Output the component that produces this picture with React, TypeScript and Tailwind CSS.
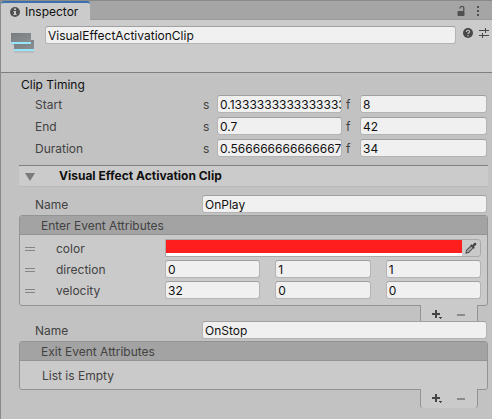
import { useId, type ReactNode } from "react";

const field =
  "h-[18px] w-full min-w-0 rounded-[3px] border border-[#b4b4b4] border-t-[#a0a0a0] bg-[#f0f0f0] pl-0.5 text-xs leading-4 text-[#101010] outline-none focus:border-[#3a72b0]";

function TextField({ label, value, id }: { label?: string; value: string; id?: string }) {
  return <input id={id} aria-label={label} type="text" defaultValue={value} className={field} />;
}

function TimingRow({ label, seconds, frames }: { label: string; seconds: string; frames: string }) {
  const id = useId();
  return (
    <div className="flex h-[18px] items-center">
      <span className="w-[168px] shrink-0 pt-0.5">{label}</span>
      <label htmlFor={id + "s"} className="w-3.5 shrink-0 pt-0.5">s</label>
      <div className="flex min-w-0 flex-[125]">
        <TextField id={id + "s"} value={seconds} />
      </div>
      <label htmlFor={id + "f"} className="w-[18px] shrink-0 pt-0.5 pl-1">f</label>
      <div className="flex min-w-0 flex-[127]">
        <TextField id={id + "f"} value={frames} />
      </div>
    </div>
  );
}

function NameRow({ value }: { value: string }) {
  const id = useId();
  return (
    <div className="flex h-[18px] items-center pr-[5px] pl-[35px]">
      <label htmlFor={id} className="w-[167px] shrink-0 pt-0.5">Name</label>
      <TextField id={id} value={value} />
    </div>
  );
}

function Handle() {
  return <span className="mt-0.5 mr-[21px] h-1 w-2.5 shrink-0 border-y border-[#858585]" />;
}

function AttributeRow({ label, children }: { label: string; children: ReactNode }) {
  return (
    <div className="flex h-[18px] items-center">
      <Handle />
      <span className="w-[109px] shrink-0 pt-0.5">{label}</span>
      {children}
    </div>
  );
}

function VectorFields({ label, values }: { label: string; values: string[] }) {
  return (
    <div className="grid min-w-0 flex-1 grid-cols-3 gap-x-[15px]">
      {values.map((v, i) => (
        <TextField key={i} label={`${label} ${"xyz"[i]}`} value={v} />
      ))}
    </div>
  );
}

function ListBox({ title, children }: { title: string; children: ReactNode }) {
  return (
    <section className="mr-1 ml-[19px]">
      <div className="rounded-[3px] border border-[#939393] bg-[#cacaca]">
        <h3 className="h-[19px] rounded-t-[2px] border-b border-[#939393] bg-[#a3a3a3] pt-0.5 pl-[21px]">{title}</h3>
        {children}
      </div>
      <div className="relative -mt-px mr-[10px] ml-auto flex h-[19px] w-[58px] rounded-b-[3px] border-x border-[#939393] bg-[#cacaca]">
        <button type="button" aria-label="Add" className="flex flex-1 items-center justify-center">
          <svg width="12" height="12" viewBox="0 0 12 12" fill="#454545" className="ml-1">
            <path d="M4 1h2v3h3v2H6v3H4V6H1V4h3zM8 8h3v1h-1v1H9V9H8z" />
          </svg>
        </button>
        <button type="button" aria-label="Remove" className="flex flex-1 items-center justify-center">
          <svg width="8" height="2" viewBox="0 0 8 2" className="mr-1">
            <path d="M0 0h8v2H0z" fill="#8b8b8b" />
          </svg>
        </button>
      </div>
    </section>
  );
}

function ClipIcon() {
  return (
    <svg width="24" height="24" viewBox="0 0 24 24" className="shrink-0">
      <defs>
        <linearGradient id="clip" x1="0" y1="0" x2="1" y2="1">
          <stop offset="0" stopColor="#797c7e" />
          <stop offset="1" stopColor="#8c8f91" />
        </linearGradient>
      </defs>
      <path d="M0 13h3v1H0zM3 20h20v2H3z" fill="#b9bbbc" />
      <path d="M3 9h20v9H3z" fill="url(#clip)" />
      <path d="M3 18h20v2H3z" fill="#94e6fc" />
      <path d="M0 2h20v9H0z" fill="url(#clip)" />
      <path d="M0 11h20v2H0z" fill="#94e6fc" />
    </svg>
  );
}

export default function App() {
  return (
    <main className="min-h-screen border-l border-[#8a8a8a] bg-[#c2c2c2] font-['Inter','Liberation_Sans',sans-serif] text-xs leading-4 text-[#424242]">
      <div className="flex h-5 justify-between border-t border-[#8a8a8a] bg-[#a5a5a5]">
        <div role="tablist" className="flex">
          <button
            type="button"
            role="tab"
            aria-selected="true"
            className="flex w-[89px] items-center rounded-t-[3px] border-t-2 border-[#3a72b0] bg-[#cbcbcb] pl-[9px] text-[#101010]"
          >
            <svg width="10" height="10" viewBox="0 0 10 10" className="mr-[5px]">
              <circle cx="5" cy="5" r="5" fill="#505050" />
              <path d="M4 1.5h2v1.5H4zM3.5 4H6v3h.7v1H3.3V7H4V5h-.5z" fill="#cbcbcb" />
            </svg>
            Inspector
          </button>
        </div>
        <div className="flex flex-1 items-center justify-end gap-2.5 border-b border-[#999999] pt-0.5 pr-3">
          <button type="button" aria-label="Lock">
            <svg width="9" height="12" viewBox="0 0 9 12" className="block">
              <path d="M1 6.5h6v4H1z" fill="#505050" stroke="#505050" />
              <path d="M3 3.5V3.200a1.900 1.900 0 0 1 3.800 0v3" fill="none" stroke="#505050" strokeWidth="1.3" />
            </svg>
          </button>
          <button type="button" aria-label="Menu">
            <svg width="4" height="12" viewBox="0 0 4 12" fill="#505050" className="block">
              <path d="M1 1h2v2H1zM1 5h2v2H1zM1 9h2v2H1z" />
            </svg>
          </button>
        </div>
      </div>

      <header className="flex h-[53px] items-start border-b border-[#7f7f7f] bg-[#cbcbcb] pt-1.5 pr-[3px] pl-2.5">
        <div className="pt-[5px] pr-2.5">
          <ClipIcon />
        </div>
        <TextField label="Clip name" value="VisualEffectActivationClip" />
        <button type="button" aria-label="Help" className="mt-0.5 ml-[7px] shrink-0">
          <svg width="10" height="10" viewBox="0 0 10 10" className="block">
            <circle cx="5" cy="5" r="5" fill="#484848" />
            <path d="M3.4 3.9C3.4 1.7 6.7 1.8 6.6 3.7 6.6 4.8 5 4.7 5 6.1" fill="none" stroke="#cbcbcb" strokeWidth="1.1" />
            <path d="M4.4 7h1.2v1.2H4.4z" fill="#cbcbcb" />
          </svg>
        </button>
        <button type="button" aria-label="Presets" className="mt-0.5 ml-1.5 shrink-0">
          <svg width="10" height="10" viewBox="0 0 10 10" fill="#484848" className="block">
            <path d="M0 2h6v1H0zM6 0h1v5H6zM7 2h3v1H7zM0 7h3v1H0zM3 5h1v5H3zM4 7h6v1H4z" />
          </svg>
        </button>
      </header>

      <section className="-ml-px pt-1 pr-[5px]">
        <h2 className="pl-[21px] text-[#101010]">Clip Timing</h2>
        <div className="flex flex-col gap-1 pt-0.5 pl-[35px]">
          <TimingRow label="Start" seconds="0.133333333333333333" frames="8" />
          <TimingRow label="End" seconds="0.7" frames="42" />
          <TimingRow label="Duration" seconds="0.566666666666667" frames="34" />
        </div>
      </section>

      <section className="-ml-px pt-2">
        <h2 className="mr-1 ml-[19px] border-t border-b border-t-[#7f7f7f] border-b-[#bababa] bg-[#cbcbcb]">
          <button type="button" aria-expanded="true" className="flex h-5 w-full items-center pl-1.5 font-bold text-[#101010]">
            <svg width="10" height="8" viewBox="0 0 10 8" className="mt-0.5 mr-6">
              <path d="M0 0h10L5 8z" fill="#7b7b7b" />
            </svg>
            Visual Effect Activation Clip
          </button>
        </h2>

        <div className="pt-2">
          <NameRow value="OnPlay" />
          <div className="pt-0.5">
            <ListBox title="Enter Event Attributes">
              <div className="flex flex-col gap-[3px] pt-1 pr-1.5 pb-1.5 pl-[5px]">
                <AttributeRow label="color">
                  <div className="flex h-[18px] min-w-0 flex-1 rounded-r-[3px] border border-[#a9a9a9]">
                    <button type="button" aria-label="Pick color" className="flex-1 border-b-3 border-white bg-[#ff1e1e]" />
                    <button type="button" aria-label="Eyedropper" className="flex w-[18px] items-center justify-center">
                      <svg width="12" height="12" viewBox="0 0 12 12">
                        <path d="M1 11l.6-2.6 4.6-4.6 2 2-4.6 4.6z" fill="#b0b0b0" stroke="#505050" strokeWidth="1.1" />
                        <path d="M5.2 3.2l1-1 1.2 1 1.7-2.1q1-.9 1.9 0 .8.9 0 1.800L8.900 4.700l1 1.200-1 .9z" fill="#454545" />
                      </svg>
                    </button>
                  </div>
                </AttributeRow>
                <AttributeRow label="direction">
                  <VectorFields label="direction" values={["0", "1", "1"]} />
                </AttributeRow>
                <AttributeRow label="velocity">
                  <VectorFields label="velocity" values={["32", "0", "0"]} />
                </AttributeRow>
              </div>
            </ListBox>
          </div>
        </div>

        <div className="relative -mt-[3px]">
          <NameRow value="OnStop" />
          <div className="pt-0.5">
            <ListBox title="Exit Event Attributes">
              <p className="pt-[7px] pb-[5px] pl-[22px]">List is Empty</p>
            </ListBox>
          </div>
        </div>
      </section>
    </main>
  );
}
